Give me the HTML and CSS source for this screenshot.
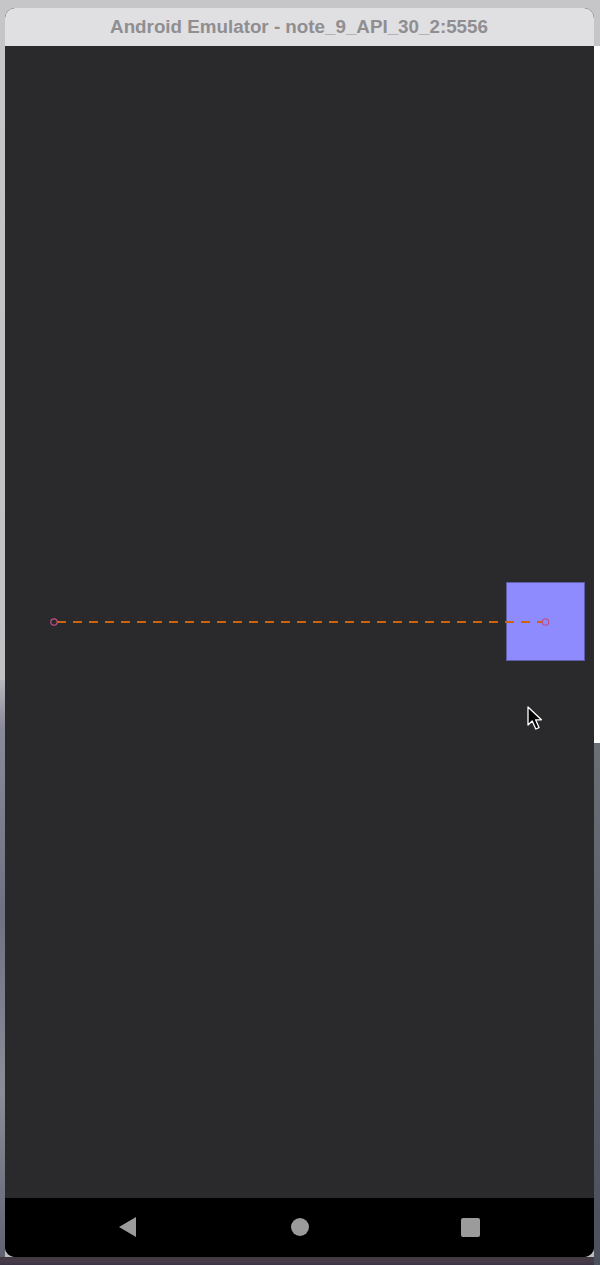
FILE: index.html
```html
<!DOCTYPE html>
<html>
<head>
<meta charset="utf-8">
<title>Android Emulator</title>
<link rel="stylesheet" href="styles.css">
</head>
<body>
<div class="desktop">
  <div class="window">
    <div class="titlebar">Android Emulator - note_9_API_30_2:5556</div>
    <div class="screen">
      <svg class="canvas" width="590" height="1152" viewBox="0 0 590 1152">
        <rect x="501.5" y="536.5" width="78" height="78" fill="#8e8bff" stroke="#5f5ca8" stroke-width="1"/>
        <line x1="52" y1="576" x2="537" y2="576" stroke="#d0640e" stroke-width="2" stroke-dasharray="9 7"/>
        <circle cx="49" cy="576" r="3.2" fill="none" stroke="#c2508a" stroke-width="1.2"/>
        <circle cx="540.5" cy="576" r="3.2" fill="none" stroke="#c2508a" stroke-width="1.2"/>
        <path class="cursor" d="M523 661 L523 679 L527.2 675 L530.8 683 L534 681.6 L530.6 673.8 L536.4 673.8 Z" fill="#000" stroke="#fff" stroke-width="1.3" stroke-linejoin="round"/>
      </svg>
    </div>
    <div class="navbar">
      <svg class="nav-icon" width="18" height="20" viewBox="0 0 18 20"><path d="M0 10 L17 0 L17 20 Z" fill="#9b9b9c"/></svg>
      <span class="nav-home"></span>
      <span class="nav-recent"></span>
    </div>
  </div>
</div>
</body>
</html>
```

FILE: styles.css
```css
html, body {
  margin: 0;
  padding: 0;
}
body {
  width: 600px;
  height: 1265px;
  overflow: hidden;
  background:
    linear-gradient(#ffffff, #ffffff) right 0 top 46px / 6px 697px no-repeat,
    linear-gradient(180deg, #6a7078, #5c626b 40%, #4a505c 100%) right 0 top 743px / 6px 522px no-repeat,
    linear-gradient(180deg, #3d3a40, #4a3c4a 50%, #3b3445) 0 1257px / 600px 8px no-repeat,
    linear-gradient(180deg, #b9b8bc, #8a8a9a 8%, #6e7282 40%, #8a8e98 70%, #5e6270) 0 680px / 5px 585px no-repeat,
    linear-gradient(180deg, #c6c5c7, #bdbcbe) 0 0 / 600px 1265px no-repeat;
  font-family: "Liberation Sans", Arial, sans-serif;
}
.desktop {
  padding: 8px 6px 0 5px;
}
.window {
  width: 589px;
  height: 1249px;
  border-radius: 10px;
  overflow: hidden;
  display: flex;
  flex-direction: column;
  background: #000;
}
.titlebar {
  height: 38px;
  flex: 0 0 38px;
  background: #e0dfe2;
  color: #8f8e91;
  font-weight: bold;
  font-size: 18.8px;
  line-height: 38px;
  text-align: center;
  box-sizing: border-box;
  padding-right: 1px;
}
.screen {
  flex: 0 0 1152px;
  height: 1152px;
  background: #2a292c;
  position: relative;
}
.canvas {
  display: block;
}
.navbar {
  flex: 1 1 auto;
  background: #000;
  display: flex;
  align-items: center;
  padding-bottom: 1px;
}
.nav-icon {
  display: block;
  margin-left: 114px;
}
.nav-home {
  width: 18px;
  height: 18px;
  border-radius: 50%;
  background: #9b9b9c;
  margin-left: 154px;
}
.nav-recent {
  width: 19px;
  height: 19px;
  border-radius: 2px;
  background: #9b9b9c;
  margin-left: 152px;
}
```
